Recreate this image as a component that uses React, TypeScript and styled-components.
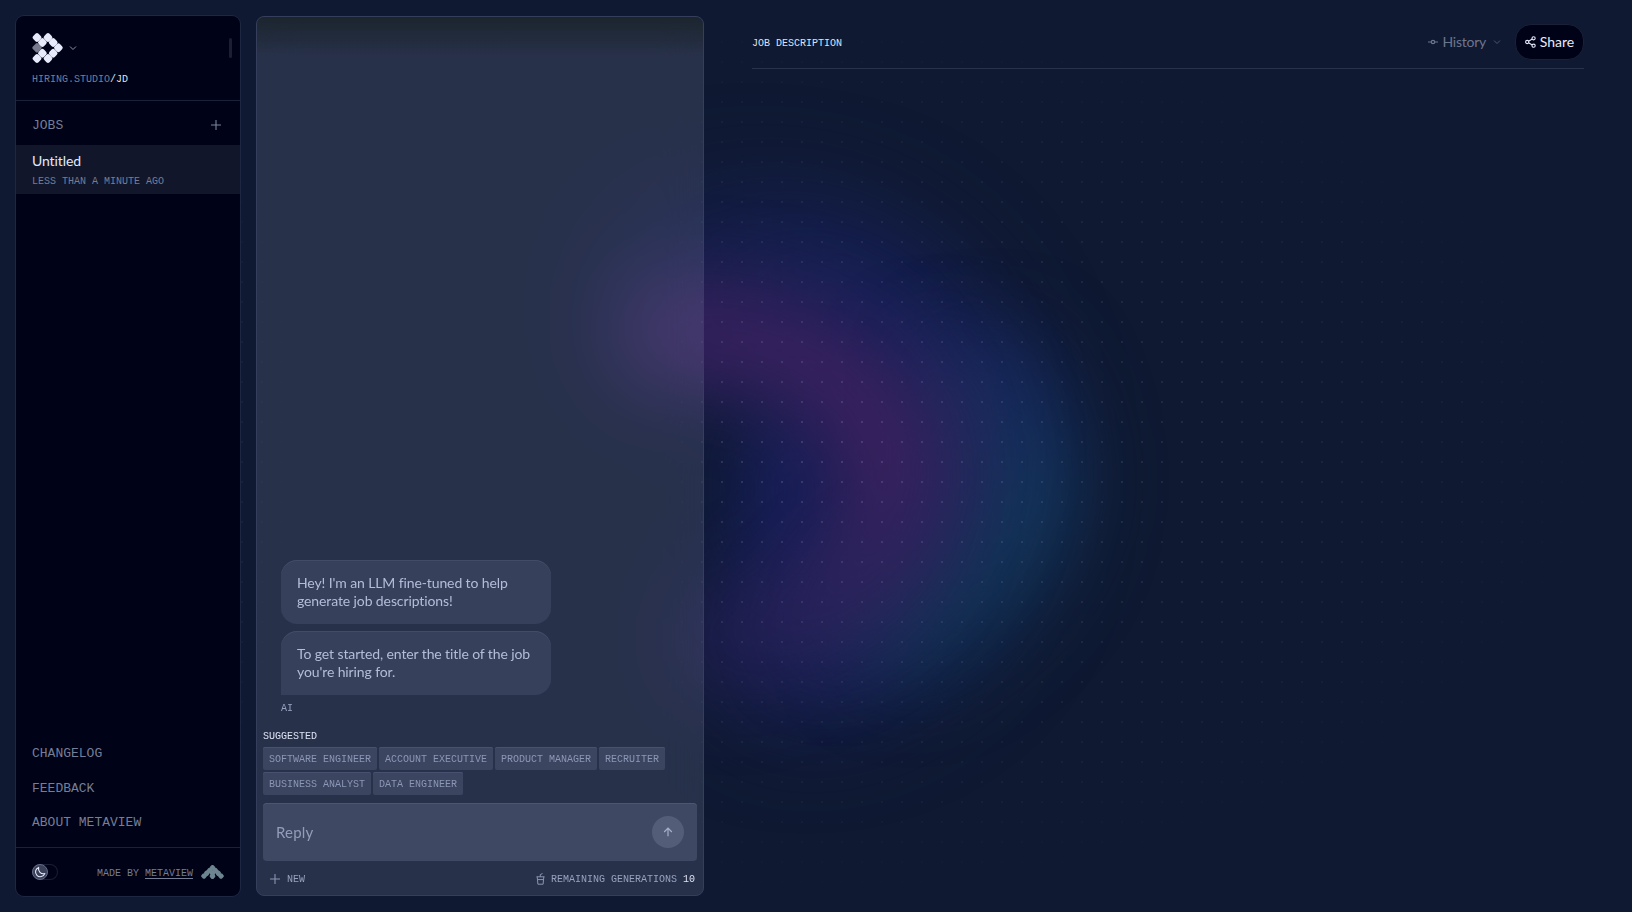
import React from 'react';
import styled, { createGlobalStyle, css } from 'styled-components';

const sans = `Lato, "Liberation Sans", sans-serif`;
const mono = `"Liberation Mono", "Courier New", monospace`;

const GlobalStyle = createGlobalStyle`
  *, *::before, *::after { box-sizing: border-box; }
  body {
    margin: 0;
    background: #0f1932;
    color: #e2e8fb;
    font-family: ${sans};
    font-variant-ligatures: none;
    overflow: hidden;
  }
  button { font: inherit; color: inherit; background: none; border: 0; padding: 0; }
  svg { display: block; flex: none; }
`;

const Screen = styled.div`
  position: relative;
  isolation: isolate;
  display: flex;
  gap: 16px;
  width: 100vw;
  height: 100vh;
  padding: 16px;
  background: #0f1932;
  overflow: hidden;
`;

const Backdrop = styled.div`
  position: absolute;
  inset: 0;
  z-index: -1;
`;

const Dots = styled.div`
  position: absolute;
  inset: 0;
  background-image: radial-gradient(circle, rgba(205, 215, 255, 0.16) 1px, transparent 1px);
  background-size: 20px 20px;
  background-position: -8px -8px;
  mask-image: radial-gradient(ellipse at center, #000, transparent 70%);
`;

const monoText = css`
  font-family: ${mono};
  font-size: 10px;
  line-height: 14px;
  white-space: pre;
  text-transform: uppercase;
`;

const Label = styled.span<{ $tone?: 'bright' | 'muted' | 'soft' }>`
  ${monoText}
  color: ${({ $tone }) => ($tone === 'bright' ? '#dde2f3' : $tone === 'soft' ? '#98a2be' : '#757d94')};
`;

/* Sidebar */

const Sidebar = styled.aside`
  display: flex;
  flex-direction: column;
  flex: none;
  width: 224px;
  background: #000217;
  border-radius: 8px;
  box-shadow: 0 0 0 1px #1d2742;
  overflow: hidden;
`;

const Brand = styled.header`
  display: flex;
  flex-direction: column;
  height: 85px;
  padding: 16px 8px 0 16px;
  border-bottom: 1px solid #1b2138;
`;

const BrandRow = styled.div`
  display: flex;
  align-items: center;
  height: 32px;
  gap: 5px;
  margin-bottom: 9px;
  color: #8d93a9;
`;

const ResizeGrip = styled.span`
  width: 3px;
  height: 20px;
  margin-left: auto;
  border-radius: 2px;
  background: #1a1f34;
`;

const SectionHead = styled.div`
  display: flex;
  align-items: center;
  justify-content: space-between;
  height: 44px;
  padding: 4px 19px 0 16px;
  color: #7c849b;
`;

const NavText = styled.span`
  ${monoText}
  font-size: 13px;
  line-height: 18px;
  color: #757e96;
`;

const SectionTitle = styled(NavText)`
  padding-top: 2px;
`;

const JobItem = styled.div`
  display: flex;
  flex-direction: column;
  height: 49px;
  padding: 7px 16px 0;
  background: #11162b;
`;

const JobTitle = styled.span`
  font-size: 14px;
  line-height: 18px;
  letter-spacing: -0.1px;
  margin-bottom: 5px;
`;

const Links = styled.nav`
  display: flex;
  flex-direction: column;
  gap: 16.5px;
  margin-top: auto;
  padding: 0 16px 15px;
`;

const Footer = styled.footer`
  display: flex;
  align-items: center;
  height: 49px;
  padding: 0 16px;
  border-top: 1px solid #1b2138;
`;

const Toggle = styled.span`
  width: 26px;
  height: 16px;
  border-radius: 8px;
  box-shadow: inset 0 0 0 1px #191e34;
`;

const Knob = styled.span`
  display: grid;
  place-items: center;
  width: 16px;
  height: 16px;
  border-radius: 50%;
  background: #3c415a;
  border: 1px solid #666c88;
  color: #e5e9fa;
`;

const Credit = styled(Label)`
  margin: 4px 8px 0 auto;
  u { text-underline-offset: 2px; }
`;

/* Chat */

const Chat = styled.section`
  position: relative;
  display: flex;
  flex-direction: column;
  flex: none;
  width: 448px;
  padding: 0 6px;
  border: 1px solid #353f5b;
  border-radius: 8px;
  background: rgba(224, 232, 255, 0.12);
  backdrop-filter: blur(20px);
  overflow: hidden;
`;

const TopShade = styled.div`
  height: 40px;
  margin: 0 -6px;
  background: linear-gradient(#1c252e, rgba(28, 37, 46, 0));
`;

const Messages = styled.div`
  display: flex;
  flex-direction: column;
  align-items: flex-start;
  margin-top: auto;
  padding: 0 18px;
  gap: 7px;
`;

const Bubble = styled.p<{ $tail?: boolean }>`
  width: 270px;
  margin: 0;
  padding: 14px 15px 14px 16px;
  border-radius: ${({ $tail }) => ($tail ? '16px 16px 16px 0' : '16px')};
  background: #37405b;
  box-shadow: inset 0 1px 0 #434c67;
  color: #b3bdd9;
  font-size: 14px;
  line-height: 18px;
  letter-spacing: -0.11px;
  white-space: pre;
`;

const Suggested = styled.div`
  display: flex;
  flex-direction: column;
  gap: 3px;
  margin-top: 14px;
`;

const Chips = styled.div`
  display: flex;
  flex-wrap: wrap;
  gap: 2px;
  width: 410px;
`;

const Chip = styled.button`
  ${monoText}
  height: 23px;
  padding: 2px 6px 0;
  border-radius: 2px;
  background: #3c4560;
  box-shadow: inset 0 1px 0 #485270;
  color: #8b97b6;
`;

const Composer = styled.div`
  display: flex;
  align-items: center;
  justify-content: space-between;
  height: 58px;
  margin-top: 8px;
  padding: 0 13px;
  border-radius: 4px;
  background: #3f4862;
  box-shadow: inset 0 1px 0 #4d5671;
`;

const Placeholder = styled.span`
  font-size: 15px;
  line-height: 20px;
  letter-spacing: 0.2px;
  color: #929dbb;
`;

const SendButton = styled.button`
  display: grid;
  place-items: center;
  width: 32px;
  height: 32px;
  border-radius: 50%;
  background: #545d77;
  color: #a7b0ca;
`;

const ChatFooter = styled.div`
  display: flex;
  align-items: center;
  height: 34px;
  padding: 2px 2px 0 7px;
  color: #8b95b1;
`;

const FooterLabel = styled(Label)`
  padding-top: 2px;
`;

const NewLabel = styled(FooterLabel)`
  margin-left: 7px;
`;

const Remaining = styled.div`
  display: flex;
  align-items: center;
  margin-left: auto;
  gap: 6px;
`;

/* Document */

const Document = styled.main`
  display: flex;
  flex-direction: column;
  flex: 1;
  padding: 0 32px;
`;

const DocHeader = styled.header`
  display: flex;
  align-items: center;
  height: 53px;
  border-bottom: 1px solid #29324a;
`;

const DocTitle = styled(Label)`
  padding-top: 4px;
`;

const HistoryButton = styled.button`
  display: flex;
  align-items: center;
  gap: 5px;
  margin-left: auto;
  margin-right: 14px;
  color: #6d768e;
  font-size: 14px;
  line-height: 18px;
  letter-spacing: -0.25px;
`;

const HistoryCaret = styled.span`
  margin-left: 2px;
  opacity: 0.65;
`;

const ShareButton = styled.button`
  display: flex;
  align-items: center;
  justify-content: center;
  gap: 4px;
  width: 69px;
  height: 36px;
  margin-bottom: 1px;
  border: 1px solid #1a2038;
  border-radius: 16px;
  background: #000217;
  color: #e6eafa;
  font-size: 14px;
  line-height: 18px;
`;

const Glow = () => (
  <svg width="1632" height="912" viewBox="0 0 1632 912">
    <defs>
      <filter id="wide" filterUnits="userSpaceOnUse" x="0" y="0" width="1632" height="912" colorInterpolationFilters="sRGB">
        <feGaussianBlur stdDeviation="48" />
      </filter>
      <filter id="mid" filterUnits="userSpaceOnUse" x="0" y="0" width="1632" height="912" colorInterpolationFilters="sRGB">
        <feGaussianBlur stdDeviation="40" />
      </filter>
      <linearGradient id="violet" gradientUnits="userSpaceOnUse" x1="0" y1="320" x2="0" y2="660">
        <stop offset="0" stopColor="#3a2160" />
        <stop offset="0.4" stopColor="#3f215f" />
        <stop offset="0.65" stopColor="#38215f" stopOpacity="0.9" />
        <stop offset="1" stopColor="#2d225a" stopOpacity="0.5" />
      </linearGradient>
      <linearGradient id="ocean" gradientUnits="userSpaceOnUse" x1="0" y1="340" x2="0" y2="660">
        <stop offset="0" stopColor="#14265c" />
        <stop offset="0.5" stopColor="#12385c" />
        <stop offset="1" stopColor="#10354f" stopOpacity="0.8" />
      </linearGradient>
      <linearGradient id="indigo" gradientUnits="userSpaceOnUse" x1="600" y1="0" x2="860" y2="0">
        <stop offset="0" stopColor="#17215a" stopOpacity="0.35" />
        <stop offset="1" stopColor="#172158" />
      </linearGradient>
    </defs>
    <g fill="none" strokeLinecap="round">
      <path d="M690 300 C 830 265 930 365 930 475 C 930 565 860 615 800 625" stroke="url(#indigo)" strokeWidth="200" filter="url(#wide)" />
      <ellipse cx="795" cy="490" rx="55" ry="100" fill="#171f5a" filter="url(#mid)" />
      <path d="M990 395 C 1045 480 1020 560 910 622" stroke="url(#ocean)" strokeWidth="115" filter="url(#mid)" />
      <path d="M940 380 C 980 480 940 560 840 620" stroke="#26285c" strokeWidth="80" strokeOpacity="0.75" filter="url(#mid)" />
      <path d="M665 332 C 810 328 890 395 890 480 C 890 560 830 622 730 646" stroke="url(#violet)" strokeWidth="90" filter="url(#mid)" />
    </g>
  </svg>
);

const brandTiles = [
  [5, 5], [16, 5], [10.4, 10], [21.2, 10], [26.4, 15.3],
  [10.4, 20.7], [21.2, 20.7], [5, 26], [16, 26],
];

const Tile = ({ x, y, size, r, fill }: { x: number; y: number; size: number; r: number; fill: string }) => (
  <rect x={x - size / 2} y={y - size / 2} width={size} height={size} rx={r} fill={fill} transform={`rotate(45 ${x} ${y})`} />
);

const BrandMark = () => (
  <svg width="32" height="32" viewBox="0 -0.5 32 32">
    <Tile x={5} y={15.3} size={7.6} r={1.8} fill="#777a8c" />
    {brandTiles.map(([x, y]) => <Tile key={`${x}-${y}`} x={x} y={y} size={7.4} r={2.2} fill="#e6eafb" />)}
  </svg>
);

const peakTiles = [
  [11.5, 2.8], [8.6, 5.5], [14.4, 5.5], [5.8, 8.2], [11.5, 8.2], [17.2, 8.2], [3, 11], [11.5, 11.2], [20, 11],
];

const PeakMark = () => (
  <svg width="23" height="14" viewBox="0 0 23 14">
    {peakTiles.map(([x, y]) => <Tile key={`${x}-${y}`} x={x} y={y} size={5} r={1.9} fill="#6d8590" />)}
  </svg>
);

const Chevron = () => (
  <svg width="8" height="8" viewBox="0 0 8 8" fill="none" stroke="currentColor" strokeWidth="1">
    <path d="M1 2.5 4 5.5 7 2.5" />
  </svg>
);

const Plus = () => (
  <svg width="10" height="10" viewBox="0 0 10 10" fill="none" stroke="currentColor" strokeWidth="1.1">
    <path d="M5 0v10M0 5h10" />
  </svg>
);

const Moon = () => (
  <svg width="12" height="12" viewBox="0 0 12 12" fill="none" stroke="currentColor" strokeWidth="1.1" strokeLinejoin="round">
    <path d="M4.6 1.4A4.8 4.8 0 1 0 10.8 7.6C7 8.6 3.8 5.4 4.6 1.4Z" />
  </svg>
);

const ArrowUp = () => (
  <svg width="10" height="10" viewBox="0 0 10 10" fill="none" stroke="currentColor" strokeWidth="1.2">
    <path d="M5 9.2V1.2M1.2 5 5 1.2 8.8 5" />
  </svg>
);

const Cup = () => (
  <svg width="9" height="12" viewBox="0 0 9 12" fill="none" stroke="currentColor" strokeWidth="1">
    <path d="M0.5 3.8h8M1.2 3.8l.7 7.4h5.2l.7-7.4M1.8 6.6h5.4M4.3 3.8V1.6L6.5.5" />
  </svg>
);

const Commit = () => (
  <svg width="10" height="10" viewBox="0 0 10 10" fill="none" stroke="currentColor" strokeWidth="1.2">
    <circle cx="5" cy="5" r="1.7" />
    <path d="M0 5h3.3M6.7 5H10" />
  </svg>
);

const ShareIcon = () => (
  <svg width="11" height="12" viewBox="0 0 11 12" fill="none" stroke="currentColor" strokeWidth="1.1">
    <circle cx="2.2" cy="6" r="1.6" />
    <circle cx="8.6" cy="2.3" r="1.6" />
    <circle cx="8.6" cy="9.7" r="1.6" />
    <path d="M3.6 5.2 7.2 3.1M3.6 6.8 7.2 8.9" />
  </svg>
);

const roles = ['Software Engineer', 'Account Executive', 'Product Manager', 'Recruiter', 'Business Analyst', 'Data Engineer'];
const links = ['Changelog', 'Feedback', 'About Metaview'];

export default function App() {
  return (
    <>
      <GlobalStyle />
      <Screen>
        <Backdrop>
          <Glow />
          <Dots />
        </Backdrop>

        <Sidebar>
          <Brand>
            <BrandRow>
              <BrandMark />
              <Chevron />
              <ResizeGrip />
            </BrandRow>
            <Label>
              hiring.studio<Label $tone="bright">/jd</Label>
            </Label>
          </Brand>
          <SectionHead>
            <SectionTitle>Jobs</SectionTitle>
            <Plus />
          </SectionHead>
          <JobItem>
            <JobTitle>Untitled</JobTitle>
            <Label>Less than a minute ago</Label>
          </JobItem>
          <Links>
            {links.map((link) => <NavText key={link}>{link}</NavText>)}
          </Links>
          <Footer>
            <Toggle>
              <Knob><Moon /></Knob>
            </Toggle>
            <Credit>Made by <u>Metaview</u></Credit>
            <PeakMark />
          </Footer>
        </Sidebar>

        <Chat>
          <TopShade />
          <Messages>
            <Bubble>{"Hey! I'm an LLM fine-tuned to help\ngenerate job descriptions!"}</Bubble>
            <Bubble $tail>{"To get started, enter the title of the job\nyou're hiring for."}</Bubble>
            <Label $tone="soft">AI</Label>
          </Messages>
          <Suggested>
            <Label $tone="bright">Suggested</Label>
            <Chips>
              {roles.map((role) => <Chip key={role}>{role}</Chip>)}
            </Chips>
          </Suggested>
          <Composer>
            <Placeholder>Reply</Placeholder>
            <SendButton><ArrowUp /></SendButton>
          </Composer>
          <ChatFooter>
            <Plus />
            <NewLabel $tone="soft">New</NewLabel>
            <Remaining>
              <Cup />
              <FooterLabel $tone="soft">Remaining generations</FooterLabel>
              <FooterLabel $tone="bright">10</FooterLabel>
            </Remaining>
          </ChatFooter>
        </Chat>

        <Document>
          <DocHeader>
            <DocTitle $tone="bright">Job description</DocTitle>
            <HistoryButton>
              <Commit />
              History
              <HistoryCaret><Chevron /></HistoryCaret>
            </HistoryButton>
            <ShareButton>
              <ShareIcon />
              Share
            </ShareButton>
          </DocHeader>
        </Document>
      </Screen>
    </>
  );
}
